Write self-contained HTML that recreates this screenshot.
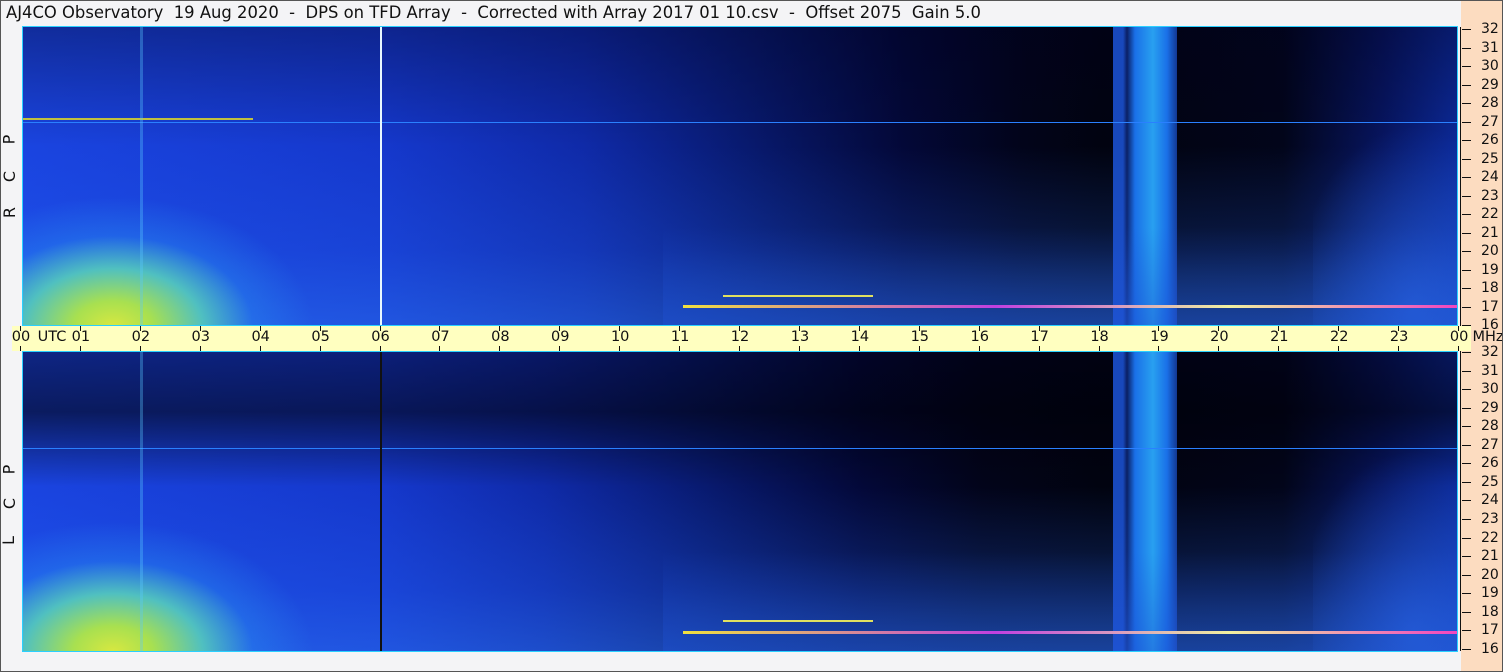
<!DOCTYPE html>
<html><head><meta charset="utf-8"><style>
*{margin:0;padding:0;box-sizing:border-box}
body{width:1503px;height:672px;overflow:hidden;background:#f4f4f6;font-family:Tahoma,"DejaVu Sans","Liberation Sans",sans-serif;position:relative}
.a{position:absolute}
.title{left:6px;top:3px;font-size:16.4px;color:#111;white-space:pre}
.peach{left:1461px;top:0;width:42px;height:672px;background:#fcdcc0}
.frame{left:0;top:0;width:1503px;height:672px;border:1px solid #555}
.panel{left:22px;width:1436px;border:1px solid #2ad0ff;overflow:hidden}
.panel div{position:absolute}
.band{left:12px;top:326px;width:1459px;height:25px;background:#ffffc0}
.hl{font-size:14.5px;color:#111;top:329px;transform:translateX(-50%)}
.tk{width:1px;background:#111}
.fl{font-size:14px;color:#111;left:1481px}
.ft{left:1462px;width:9px;height:1px;background:#111}
.lab{font-size:16px;color:#111;transform:rotate(-90deg);left:4px}
</style></head><body>
<div class="a peach"></div>
<div class="a title">AJ4CO Observatory  19 Aug 2020  -  DPS on TFD Array  -  Corrected with Array 2017 01 10.csv  -  Offset 2075  Gain 5.0</div>

<div class="a panel" style="top:26px;height:300px">
 <div style="inset:0;background:linear-gradient(90deg,#1a44e0 0,#1538cc 360px,#0f2aa8 560px,#081a70 720px,#030838 880px,#02041a 1000px,#010310 1080px,#02051a 1260px,#071560 1360px,#0c2a9a 1436px)"></div>
 <div style="inset:0;background:linear-gradient(180deg,rgba(0,0,30,.35) 0,rgba(0,0,0,0) 40%,rgba(40,110,255,.2) 75%,rgba(50,130,255,.4) 100%)"></div>
 <div style="left:0;top:100px;width:380px;height:200px;background:radial-gradient(ellipse 200px 130px at 90px 200px,#d8e840 0,#a8e050 20%,#50c0c0 45%,rgba(40,140,240,.4) 70%,rgba(40,140,240,0) 100%)"></div>
 <div style="left:1090px;top:0;width:64px;height:300px;background:linear-gradient(90deg,rgba(30,90,230,.8) 0,rgba(30,90,230,.8) 10px,rgba(20,60,180,.5) 14px,#1a70e8 22px,#28a0f0 40px,#1a70e8 54px,rgba(30,90,230,.6) 64px)"></div>
 <div style="left:640px;top:200px;width:800px;height:100px;background:linear-gradient(180deg,rgba(0,0,0,0),rgba(30,80,210,.45))"></div>
 <div style="left:1290px;top:60px;width:146px;height:240px;background:radial-gradient(ellipse 120px 180px at 100px 220px,rgba(40,100,230,.6),rgba(40,100,230,0))"></div>
 <div style="left:660px;top:278px;width:780px;height:3px;background:linear-gradient(90deg,#f0e040,#c040e0 40%,#f0f0a0 70%,#f040c0)"></div>
 <div style="left:700px;top:268px;width:150px;height:2px;background:#e0e060"></div>
 <div style="left:0;top:95px;width:1436px;height:1px;background:#2a80ff"></div>
 <div style="left:0;top:91px;width:230px;height:2px;background:#c0c040"></div>
 <div style="left:357px;top:0;width:2px;height:300px;background:#e8f8ff"></div>
 <div style="left:117px;top:0;width:3px;height:300px;background:rgba(90,200,255,.35)"></div>
</div>
<div class="a panel" style="top:351px;height:301px">
 <div style="inset:0;background:linear-gradient(90deg,#1a44e0 0,#1538cc 360px,#0f2aa8 520px,#081a70 680px,#030838 840px,#02041a 960px,#010310 1080px,#02051a 1260px,#071560 1360px,#0c2a9a 1436px)"></div>
 <div style="inset:0;background:linear-gradient(180deg,rgba(0,0,20,.45) 0,rgba(0,0,10,.6) 20%,rgba(0,0,0,0) 45%,rgba(40,110,255,.25) 80%,rgba(50,130,255,.4) 100%)"></div>
 <div style="left:0;top:100px;width:380px;height:201px;background:radial-gradient(ellipse 200px 130px at 90px 200px,#d8e840 0,#a8e050 20%,#50c0c0 45%,rgba(40,140,240,.4) 70%,rgba(40,140,240,0) 100%)"></div>
 <div style="left:1090px;top:0;width:64px;height:301px;background:linear-gradient(90deg,rgba(30,90,230,.8) 0,rgba(30,90,230,.8) 10px,rgba(20,60,180,.5) 14px,#1a70e8 22px,#28a0f0 40px,#1a70e8 54px,rgba(30,90,230,.6) 64px)"></div>
 <div style="left:640px;top:200px;width:800px;height:101px;background:linear-gradient(180deg,rgba(0,0,0,0),rgba(30,80,210,.45))"></div>
 <div style="left:1290px;top:60px;width:146px;height:241px;background:radial-gradient(ellipse 120px 180px at 100px 220px,rgba(40,100,230,.6),rgba(40,100,230,0))"></div>
 <div style="left:660px;top:279px;width:780px;height:3px;background:linear-gradient(90deg,#f0e040,#c040e0 40%,#f0f0a0 70%,#f040c0)"></div>
 <div style="left:700px;top:268px;width:150px;height:2px;background:#e0e060"></div>
 <div style="left:0;top:96px;width:1436px;height:1px;background:#2a80ff"></div>
 <div style="left:357px;top:0;width:2px;height:301px;background:#111"></div>
 <div style="left:117px;top:0;width:3px;height:301px;background:rgba(90,200,255,.35)"></div>
</div>

<div class="a band"></div>
<div class="a lab" style="top:130px">P</div>
<div class="a lab" style="top:167px">C</div>
<div class="a lab" style="top:203px">R</div>
<div class="a lab" style="top:460px">P</div>
<div class="a lab" style="top:494px">C</div>
<div class="a lab" style="top:531px">L</div>

<div id="ax"></div>
<script>
var h='';
for(var i=0;i<=24;i++){var x=20+i*59.92;var t=(i%24<10?'0':'')+(i%24);
 h+='<div class="a tk" style="left:'+Math.round(x)+'px;top:326px;height:5px"></div><div class="a tk" style="left:'+Math.round(x)+'px;top:346px;height:5px"></div>';
 h+='<div class="a hl" style="left:'+(x+1)+'px">'+t+'</div>';}
h+='<div class="a hl" style="left:52px">UTC</div><div class="a hl" style="left:1488px">MHz</div>';
for(var k=0;k<=16;k++){var f=32-k;
 var y1=Math.round(29+k*18.5), y2=Math.round(352+k*18.55);
 h+='<div class="a ft" style="top:'+y1+'px"></div><div class="a fl" style="top:'+(y1-8)+'px">'+f+'</div>';
 h+='<div class="a ft" style="top:'+y2+'px"></div><div class="a fl" style="top:'+(y2-8)+'px">'+f+'</div>';}
document.getElementById('ax').innerHTML=h;
</script>
<div class="a" style="left:1460px;top:27px;width:1px;height:299px;background:#111"></div>
<div class="a" style="left:1460px;top:351px;width:1px;height:300px;background:#111"></div>
<div class="a frame"></div>
</body></html>
